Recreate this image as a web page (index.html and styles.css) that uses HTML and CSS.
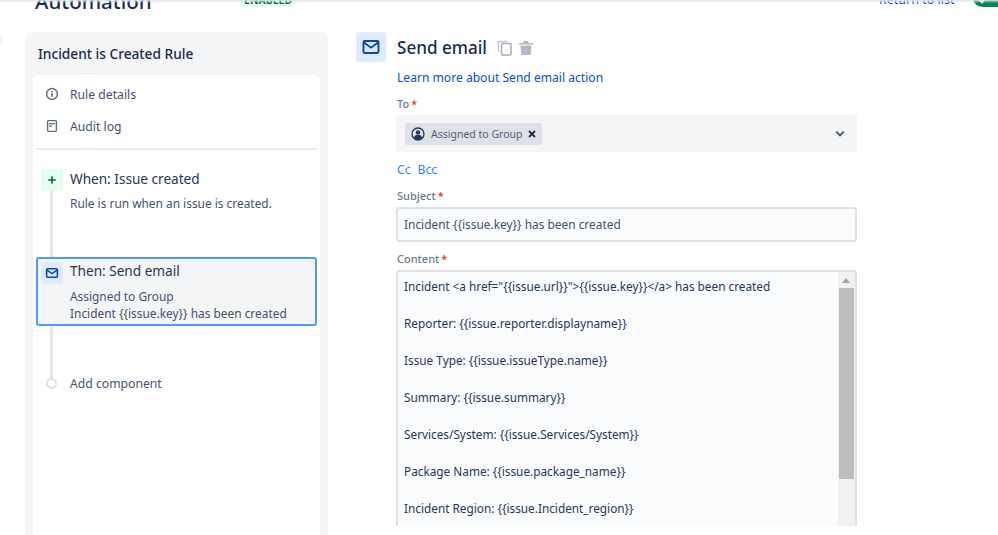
FILE: index.html
```html
<!DOCTYPE html>
<html lang="en">
<head>
<meta charset="utf-8">
<title>Automation</title>
<link rel="stylesheet" href="styles.css">
</head>
<body>
<div class="page">
  <div class="topshadow"></div>
  <header class="header">
    <h1 class="title">Automation</h1>
    <span class="lozenge">ENABLED</span>
    <a class="return">Return to list</a>
    <span class="toggle"><svg width="14" height="14" viewBox="0 0 14 14"><path d="M2 6l3 3 5-6" fill="none" stroke="#fff" stroke-width="2.4"/></svg></span>
  </header>
  <span class="collapse"></span>
  <main class="main">
    <aside class="side">
      <h2 class="rule-name">Incident is Created Rule</h2>
      <div class="card">
        <div class="nav-row">
          <svg class="nav-icon" width="16" height="16" viewBox="0 0 16 16"><circle cx="8" cy="8" r="5.4" fill="none" stroke="#5e6c84" stroke-width="1.5"/><rect x="7.2" y="7.2" width="1.6" height="3.6" fill="#5e6c84"/><rect x="7.2" y="4.9" width="1.6" height="1.6" fill="#5e6c84"/></svg>
          <span>Rule details</span>
        </div>
        <div class="nav-row">
          <svg class="nav-icon" width="16" height="16" viewBox="0 0 16 16"><rect x="3.6" y="2.6" width="8.8" height="10.8" rx="1" fill="none" stroke="#5e6c84" stroke-width="1.4"/><rect x="5" y="5" width="6" height="1.3" fill="#5e6c84"/><rect x="5" y="7.4" width="3" height="1.3" fill="#5e6c84"/></svg>
          <span>Audit log</span>
        </div>
        <hr class="divider">
        <div class="flow">
          <div class="line"></div>
          <div class="step step-when">
            <span class="badge badge-green"><svg width="12" height="12" viewBox="0 0 12 12"><path d="M6 2.2v7.6M2.2 6h7.6" stroke="#006644" stroke-width="1.6"/></svg></span>
            <div>
              <div class="step-title">When: Issue created</div>
              <div class="step-desc">Rule is run when an issue is created.</div>
            </div>
          </div>
          <div class="step step-then">
            <span class="badge badge-blue"><svg width="14" height="14" viewBox="0 0 14 14"><rect x="1.6" y="2.8" width="10.8" height="8.4" rx="1" fill="none" stroke="#0747a6" stroke-width="1.6"/><path d="M2 4.2l5 3.4 5-3.4" fill="none" stroke="#0747a6" stroke-width="1.5"/></svg></span>
            <div>
              <div class="step-title">Then: Send email</div>
              <div class="step-desc">Assigned to Group<br>Incident {{issue.key}} has been created</div>
            </div>
          </div>
          <div class="step-add">
            <span class="dot"></span>
            <span>Add component</span>
          </div>
        </div>
      </div>
    </aside>
    <section class="detail">
      <div class="detail-head">
        <span class="head-icon"><svg width="20" height="20" viewBox="0 0 20 20"><rect x="2.5" y="4" width="15" height="12" rx="1.2" fill="none" stroke="#0747a6" stroke-width="1.9"/><path d="M3 5.5l7 5.2 7-5.2" fill="none" stroke="#0747a6" stroke-width="1.8"/></svg></span>
        <div class="head-body">
          <div class="head-title">
            <h2 class="send">Send email</h2>
            <svg class="tool" width="16" height="16" viewBox="0 0 16 16"><path d="M1.5 12V1.5H10" fill="none" stroke="#c1c7d0" stroke-width="1.4"/><rect x="4.6" y="3.6" width="9.4" height="11.4" rx="1" fill="none" stroke="#a5adba" stroke-width="1.5"/></svg>
            <svg class="tool" width="16" height="16" viewBox="0 0 16 16"><path d="M1 3h14v1.6H1zM5.5 1h5v2h-5zM2.4 5.6h11.2l-1 9.4H3.4z" fill="#b3bac5"/></svg>
          </div>
          <a class="learn">Learn more about Send email action</a>
        </div>
      </div>
      <form class="form">
        <div class="label label-to">To<i>*</i></div>
        <div class="select">
          <span class="tag">
            <svg width="14" height="14" viewBox="0 0 14 14"><circle cx="7" cy="7" r="6" fill="none" stroke="#253858" stroke-width="1.3"/><circle cx="7" cy="5.4" r="2.2" fill="#253858"/><path d="M3 11.2c0-2.6 1.8-3.4 4-3.4s4 .8 4 3.4L7 13z" fill="#253858"/></svg>
            <span class="tag-text">Assigned to Group</span>
            <svg width="8" height="8" viewBox="0 0 8 8"><path d="M1 1l6 6M7 1L1 7" stroke="#172b4d" stroke-width="1.8"/></svg>
          </span>
          <svg class="chev" width="10" height="8" viewBox="0 0 10 8"><path d="M1.2 1.6L5 5.4l3.8-3.8" fill="none" stroke="#42526e" stroke-width="1.9"/></svg>
        </div>
        <div class="ccbcc"><a>Cc</a><a>Bcc</a></div>
        <div class="label label-subject">Subject<i>*</i></div>
        <div class="input">Incident {{issue.key}} has been created</div>
        <div class="label label-content">Content<i>*</i></div>
        <div class="textarea">
          <div class="lines">
            <p>Incident &lt;a href="{{issue.url}}"&gt;{{issue.key}}&lt;/a&gt; has been created</p>
            <p>Reporter: {{issue.reporter.displayname}}</p>
            <p>Issue Type: {{issue.issueType.name}}</p>
            <p>Summary: {{issue.summary}}</p>
            <p>Services/System: {{issue.Services/System}}</p>
            <p>Package Name: {{issue.package_name}}</p>
            <p>Incident Region: {{issue.Incident_region}}</p>
          </div>
          <div class="scrollbar">
            <span class="arrow"></span>
            <span class="thumb"></span>
          </div>
        </div>
      </form>
    </section>
  </main>
</div>
</body>
</html>
```

FILE: styles.css
```css
* { box-sizing: border-box; }
html, body { margin: 0; height: 100%; background: #fff; }
body { overflow: hidden; font-family: "Noto Sans", "Open Sans", sans-serif; color: #172b4d; }
p, h1, h2 { margin: 0; font-weight: 400; }
.page { position: relative; width: 998px; height: 535px; overflow: hidden; }
.topshadow { position: absolute; z-index: 2; left: 0; right: 0; top: 0; height: 3px; background: linear-gradient(#dfe3ea, rgba(255,255,255,0)); }
.header { display: flex; align-items: flex-start; height: 44px; margin-top: -12px; padding-left: 35px; position: relative; }
.title { font-size: 20.5px; line-height: 30px; margin-top: -2px; color: #172b4d; font-weight: 500; width: 205px; }
.lozenge { height: 19px; padding: 5px 4px 0; border-radius: 3px; background: #e3fcef; color: #006644; font-size: 10.5px; line-height: 14px; font-weight: 700; }
.return { position: absolute; left: 879px; top: 5px; font-size: 12.5px; line-height: 14px; color: #0052cc; }
.toggle { position: absolute; left: 973px; top: 0; width: 40px; height: 19px; border-radius: 10px; background: #00875a; padding: 2px 0 0 4px; }
.collapse { position: absolute; left: -14px; top: 32px; width: 16px; height: 16px; border-radius: 50%; border: 1px solid #dfe1e6; background: #fff; }
.main { display: flex; align-items: flex-start; padding-left: 25px; }
.side { width: 303px; height: 520px; padding: 0 8px; background: #f4f5f7; border-radius: 8px 8px 0 0; flex: none; }
.rule-name { font-size: 13.7px; line-height: 20px; padding: 12px 0 11px 5px; font-weight: 500; color: #172b4d; }
.card { height: 470px; background: #fff; border-radius: 6px 6px 0 0; padding-top: 3px; }
.nav-row { display: flex; align-items: center; height: 32px; padding-left: 11px; gap: 10px; font-size: 12.2px; color: #42526e; }
.nav-icon { flex: none; }
.divider { height: 2px; margin: 6px 3px 0; border: 0; background: #ebecf0; }
.flow { position: relative; padding-top: 19px; }
.line { position: absolute; left: 17px; top: 30px; width: 3px; height: 200px; background: #e4e6ec; }
.step { position: relative; display: flex; gap: 7px; }
.step-when { height: 88px; margin-left: 8px; }
.step-then { width: 281px; height: 69px; margin-left: 3px; padding: 3px 0 0 3px; background: #f4f5f7; border: 2px solid #4c9aff; border-radius: 3px; }
.badge { flex: none; display: flex; align-items: center; justify-content: center; width: 22px; height: 22px; border-radius: 3px; }
.badge-green { background: #e3fcef; }
.badge-blue { background: #deebff; }
.step-title { font-size: 13.6px; line-height: 20px; color: #253858; margin-bottom: 6px; }
.step-then .step-title { margin-top: -1px; margin-bottom: 7px; }
.step-desc { font-size: 11.9px; line-height: 17px; color: #42526e; }
.step-add { position: relative; display: flex; align-items: center; gap: 13px; margin: 49px 0 0 13px; font-size: 12.2px; line-height: 17px; color: #42526e; }
.dot { width: 11px; height: 11px; border-radius: 50%; border: 2px solid #dfe1e6; background: #fff; }
.detail { margin-left: 28px; width: 501px; }
.detail-head { display: flex; gap: 11px; }
.head-icon { flex: none; display: flex; align-items: center; justify-content: center; width: 30px; height: 30px; background: #deebff; border-radius: 3px; }
.head-title { display: flex; align-items: center; height: 32px; gap: 5px; }
.send { font-size: 17.1px; line-height: 32px; font-weight: 500; color: #172b4d; margin-right: 5px; }
.tool { flex: none; }
.learn { display: block; font-size: 12.1px; line-height: 18px; margin-top: 5px; color: #0052cc; }
.form { display: block; padding-left: 40px; }
.label { font-size: 11px; line-height: 14px; font-weight: 500; color: #6b778c; padding-left: 1px; }
.label i { color: #de350b; font-style: normal; margin-left: 2px; }
.label-to { margin-top: 10px; }
.select, .input, .textarea { width: 461px; }
.select { display: flex; align-items: center; justify-content: space-between; height: 37px; margin-top: 4px; padding: 0 12px 0 9px; background: #f4f5f7; border-radius: 3px; }
.tag { display: flex; align-items: center; gap: 6px; height: 22px; padding: 0 6px; background: #dfe1e6; border-radius: 2px; }
.tag-text { font-size: 10.5px; color: #505f79; }
.chev { flex: none; }
.ccbcc { display: flex; gap: 7px; margin: 9px 0 0 1px; font-size: 12.2px; line-height: 17px; color: #2684ff; }
.label-subject { margin-top: 11px; }
.input { height: 35px; margin-top: 4px; padding: 0 6px; border: 2px solid #dfe1e6; border-radius: 3px; background: #fafbfc; font-size: 11.9px; line-height: 31px; color: #42526e; }
.label-content { margin-top: 10px; }
.textarea { position: relative; height: 256px; margin-top: 4px; overflow: hidden; border: 2px solid #dfe1e6; border-bottom: 0; border-radius: 3px 3px 0 0; background: #fafbfc; display: flex; }
.lines { flex: 1; padding: 6px 0 0 6px; font-size: 11.8px; line-height: 17px; color: #253858; }
.lines p { height: 17px; margin-bottom: 20px; }
.scrollbar { flex: none; display: block; width: 17px; height: 254px; background: #f1f1f1; position: relative; }
.arrow { position: absolute; left: 4px; top: 6px; width: 0; height: 0; border: 4px solid transparent; border-top: 0; border-bottom: 5px solid #a3a3a3; }
.thumb { position: absolute; left: 1px; top: 16px; width: 15px; height: 191px; background: #bdbdbd; }
```
